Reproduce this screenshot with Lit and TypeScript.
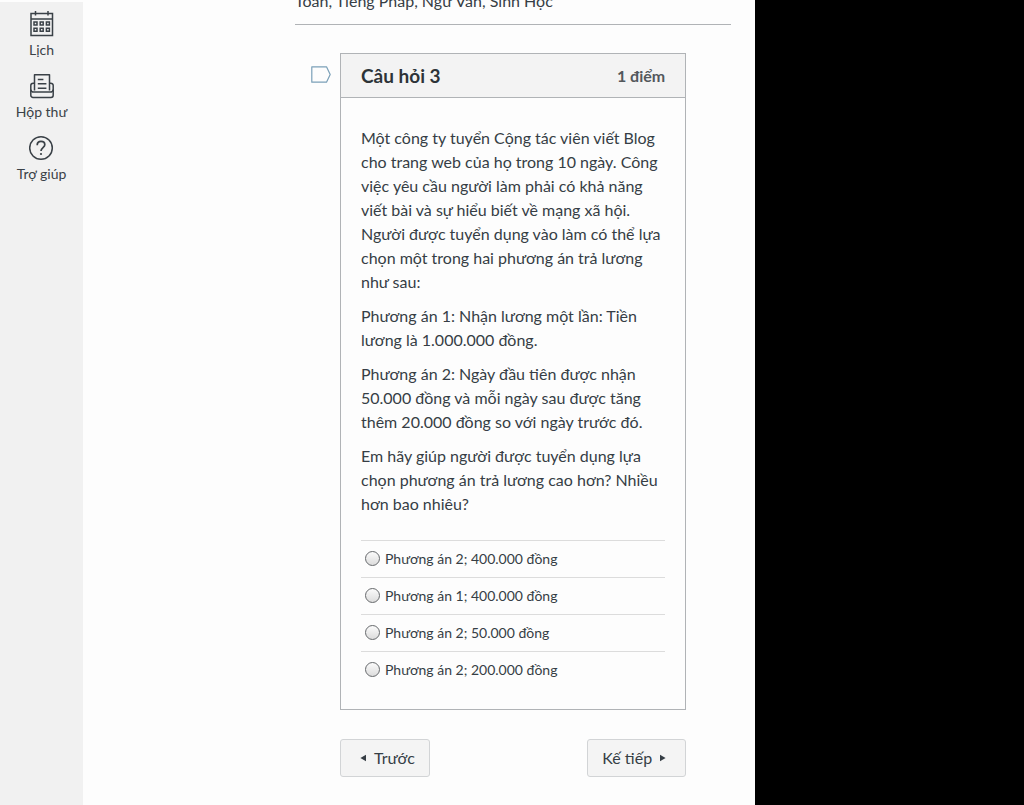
import { LitElement, html, css, svg } from "lit";
import { customElement, state } from "lit/decorators.js";

const calendarIcon = svg`
  <svg viewBox="1 0 26 28" width="26" height="28" fill="none" stroke="currentColor" stroke-width="1.5" aria-hidden="true">
    <path d="M3 3.5h21.5v22H3zM3 9h21.5M7.5 1v4.500M20 1v4.500" />
    <path d="M6 12h3v3H6zM12.200 12h3v3h-3zM18.400 12h3v3h-3zM6 18.300h3v3H6zM12.200 18.300h3v3h-3zM18.400 18.300h3v3h-3z" />
  </svg>`;

const inboxIcon = svg`
  <svg viewBox="0 0 26 28" width="26" height="28" fill="none" stroke="currentColor" stroke-width="1.5" stroke-linejoin="round" aria-hidden="true">
    <path d="M5.5 18.4V2.7h15v15.7M8.8 7.4h5.6M8.8 11.7h8.6M8.8 16.2h8.6" />
    <path d="M5.5 11.2H4.2a2.4 2.4 0 0 0-2.4 2.4v9.6a2.2 2.2 0 0 0 2.2 2.2h18a2.2 2.2 0 0 0 2.2-2.2v-9.6a2.4 2.4 0 0 0-2.4-2.4h-1.3" />
    <path d="M1.8 17.6c.3 1.6 1.2 2.5 2.8 2.5h16.8c1.6 0 2.5-.9 2.8-2.5" />
  </svg>`;

const helpIcon = svg`
  <svg viewBox="1 0 26 28" width="26" height="28" fill="none" stroke="currentColor" stroke-width="1.5" aria-hidden="true">
    <circle cx="13" cy="14" r="11.3" />
    <path d="M9.2 11.2c0-2.3 1.5-3.8 3.8-3.8 2.2 0 3.8 1.4 3.8 3.3 0 3-3.8 3-3.8 6.4" stroke-width="1.7" />
    <circle cx="13" cy="20" r="1.1" fill="currentColor" stroke="none" />
  </svg>`;

const NAV = [
  { label: "Lịch", icon: calendarIcon },
  { label: "Hộp thư", icon: inboxIcon },
  { label: "Trợ giúp", icon: helpIcon },
];

const PARAGRAPHS = [
  "Một công ty tuyển Cộng tác viên viết Blog cho trang web của họ trong 10 ngày. Công việc yêu cầu người làm phải có khả năng viết bài và sự hiểu biết về mạng xã hội. Người được tuyển dụng vào làm có thể lựa chọn một trong hai phương án trả lương như sau:",
  "Phương án 1: Nhận lương một lần: Tiền lương là 1.000.000 đồng.",
  "Phương án 2: Ngày đầu tiên được nhận 50.000 đồng và mỗi ngày sau được tăng thêm 20.000 đồng so với ngày trước đó.",
  "Em hãy giúp người được tuyển dụng lựa chọn phương án trả lương cao hơn? Nhiều hơn bao nhiêu?",
];

const ANSWERS = [
  "Phương án 2; 400.000 đồng",
  "Phương án 1; 400.000 đồng",
  "Phương án 2; 50.000 đồng",
  "Phương án 2; 200.000 đồng",
];

@customElement("side-nav")
class SideNav extends LitElement {
  static styles = css`
    :host {
      display: block;
      background: #f1f1f1;
      border-top: 2px solid #fdfdfd;
      box-sizing: border-box;
    }
    .list {
      display: flex;
      flex-direction: column;
      gap: 10px;
      padding-top: 8px;
    }
    .item {
      display: flex;
      flex-direction: column;
      align-items: center;
      color: #3a4147;
      font-size: 14px;
      line-height: 24px;
      text-decoration: none;
    }
    .item svg {
      display: block;
    }
  `;

  render() {
    return html`<nav class="list">
      ${NAV.map((n) => html`<a class="item" href="#">${n.icon}<span>${n.label}</span></a>`)}
    </nav>`;
  }
}

@customElement("quiz-question")
class QuizQuestion extends LitElement {
  static styles = css`
    :host {
      display: block;
      border: 1px solid #b0b3b6;
    }
    .head {
      display: flex;
      align-items: center;
      justify-content: space-between;
      padding: 1px 20px 0;
      background: #f3f3f3;
      border-bottom: 1px solid #b0b3b6;
      line-height: 42px;
    }
    .title {
      margin: 0;
      font-size: 19px;
      font-weight: 700;
      color: #2d3338;
    }
    .points {
      font-size: 16px;
      font-weight: 700;
      color: #53585c;
    }
    .body {
      padding: 28px 20px 21px;
    }
    .text {
      margin: 0 0 10px;
      font-size: 16px;
      line-height: 24px;
    }
    .answers {
      margin: 24px 0 0;
      padding: 0;
      border: 0;
    }
    .answer {
      display: flex;
      align-items: center;
      gap: 5px;
      padding: 0 4px 1px;
      border-top: 1px solid #dcdcdc;
      font-size: 14px;
      line-height: 35px;
    }
    .radio {
      appearance: none;
      box-sizing: border-box;
      width: 15px;
      height: 15px;
      margin: 0;
      border: 1px solid #66696c;
      border-radius: 50%;
      background: linear-gradient(#fbfbfb, #dcdcdc);
    }
    .radio:checked {
      background: radial-gradient(#2d3b45 0 3px, #f0f0f0 4px);
    }
  `;

  render() {
    return html`
      <header class="head">
        <h2 class="title">Câu hỏi 3</h2>
        <span class="points">1 điểm</span>
      </header>
      <div class="body">
        ${PARAGRAPHS.map((p) => html`<p class="text">${p}</p>`)}
        <fieldset class="answers" aria-label="Câu hỏi 3">
          ${ANSWERS.map(
            (a, i) => html`<label class="answer" for="answer-${i}">
              <input class="radio" type="radio" name="answer" id="answer-${i}" />${a}
            </label>`
          )}
        </fieldset>
      </div>
    `;
  }
}

@customElement("app-root")
class AppRoot extends LitElement {
  @state() private flagged = false;

  static styles = css`
    :host {
      display: grid;
      grid-template-columns: 83px minmax(0, 5fr) minmax(0, 2fr);
      min-height: 100vh;
      background: #000;
      color: #363e45;
      font-family: Lato, "Noto Sans", sans-serif;
    }
    .main {
      overflow: hidden;
      padding: 0 24px 28px 212px;
      background: #fdfdfd;
    }
    .subjects {
      margin: -11px 0 0;
      padding-bottom: 11px;
      border-bottom: 1px solid #b0b3b6;
      font-size: 16px;
      line-height: 24px;
    }
    .question-row {
      display: grid;
      grid-template-columns: 29px minmax(0, 1fr);
      align-items: start;
      margin-top: 28px;
      padding: 0 45px 0 16px;
    }
    .flag {
      display: block;
      margin-top: 13px;
      padding: 0;
      border: 0;
      background: none;
      line-height: 0;
      justify-self: start;
      color: #7ba0b8;
      cursor: pointer;
    }
    .pager {
      display: flex;
      justify-content: space-between;
      margin-top: 29px;
      padding: 0 45px;
    }
    .page {
      display: flex;
      align-items: center;
      gap: 8px;
      padding: 0 14px;
      border: 1px solid #d2d4d6;
      border-radius: 3px;
      background: #f4f4f4;
      color: inherit;
      font-family: inherit;
      font-size: 16px;
      line-height: 36px;
      cursor: pointer;
    }
    .prev {
      padding-left: 19px;
    }
    .next {
      padding-right: 19px;
    }
  `;

  render() {
    return html`
      <side-nav></side-nav>
      <main class="main">
        <p class="subjects">Toán, Tiếng Pháp, Ngữ Văn, Sinh Học</p>
        <div class="question-row">
          <button
            class="flag"
            aria-label="Đánh dấu câu hỏi"
            aria-pressed=${this.flagged}
            @click=${() => (this.flagged = !this.flagged)}
          >
            <svg viewBox="0 0 20 17" width="20" height="17" fill=${this.flagged ? "#fc5e13" : "#fdfdfd"} stroke="currentColor" stroke-width="1.2">
              <path d="M.8.8h14.7l3.7 7.7-3.7 7.7H.8z" stroke-linejoin="round" />
            </svg>
          </button>
          <quiz-question></quiz-question>
        </div>
        <div class="pager">
          <button class="page prev">
            <svg viewBox="0 0 6 8" width="6" height="8" fill="currentColor" aria-hidden="true"><path d="M6 .8v6.4L.4 4z" /></svg>
            Trước
          </button>
          <button class="page next">
            Kế tiếp
            <svg viewBox="0 0 6 8" width="6" height="8" fill="currentColor" aria-hidden="true"><path d="M0 .8v6.4L5.6 4z" /></svg>
          </button>
        </div>
      </main>
    `;
  }
}
